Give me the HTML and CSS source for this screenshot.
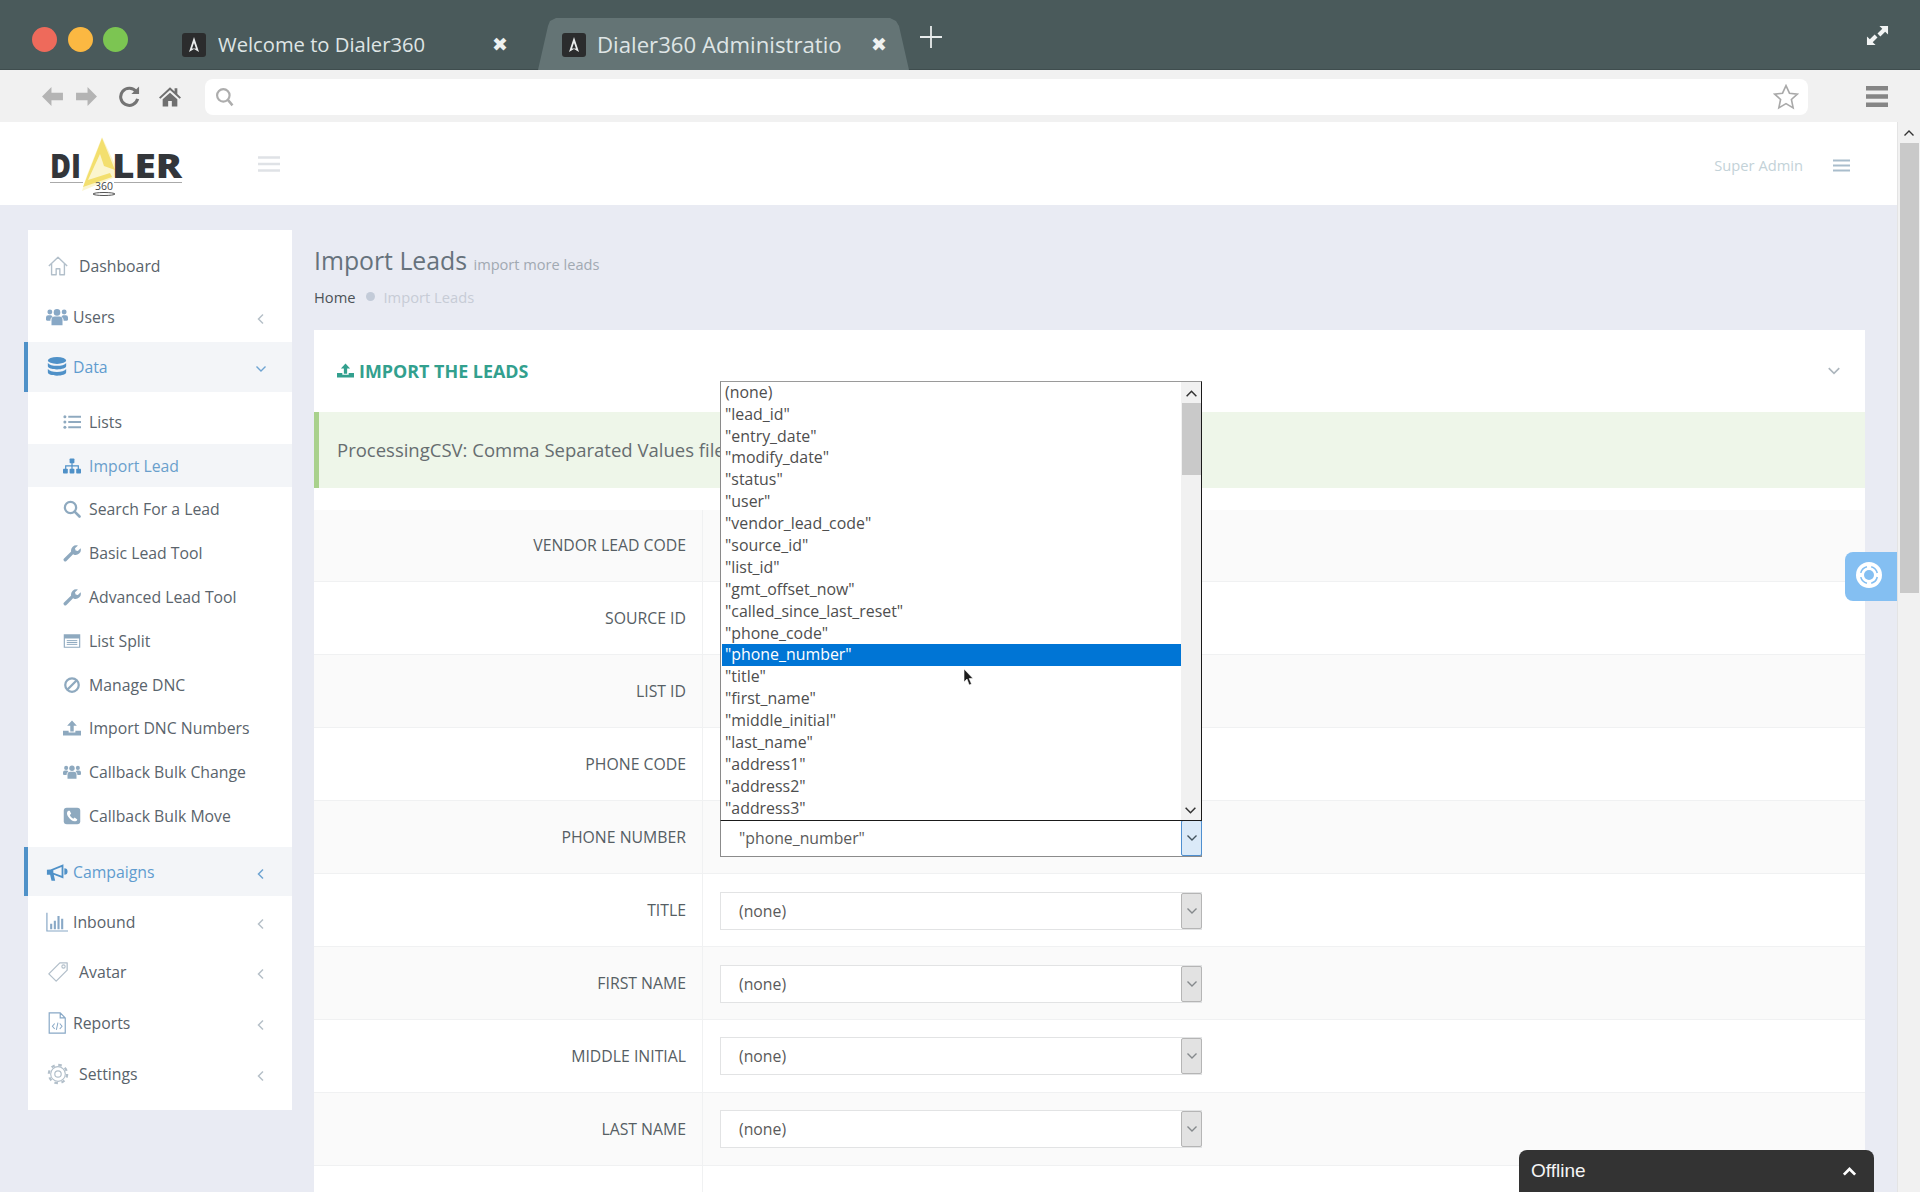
FILE: index.html
```html
<!DOCTYPE html>
<html lang="en">
<head>
<meta charset="utf-8">
<title>Dialer360 Administration</title>
<link rel="stylesheet" href="styles.css">
</head>
<body>
<svg class="sprite" aria-hidden="true">
  <symbol id="i-home" viewBox="0 0 24 24"><path d="M2 12 12 2.5 22 12M5 9.5V21.5h5V15h4v6.500h5V9.500" fill="none" stroke="currentColor" stroke-width="1.500" stroke-linejoin="round"/></symbol>
  <symbol id="i-users" viewBox="0 0 24 24"><g fill="currentColor"><circle cx="12" cy="7" r="3.600"/><circle cx="4.200" cy="6.500" r="2.700"/><circle cx="19.800" cy="6.500" r="2.700"/><path d="M6 21v-6a3.500 3.500 0 0 1 3.500-3.500h5A3.500 3.500 0 0 1 18 15v6z"/><path d="M0 15v-2.500a2.500 2.500 0 0 1 2.500-2.500h3.300c.4.800 1 1.300 1.500 1.700C5.500 12.500 4.800 14 4.800 15.500V16H1.500A1.500 1.500 0 0 1 0 15zM24 15v-2.500a2.500 2.500 0 0 0-2.500-2.500h-3.300c-.4.800-1 1.300-1.500 1.700 1.800.8 2.500 2.300 2.500 3.800V16h3.300a1.500 1.500 0 0 0 1.500-1z"/></g></symbol>
  <symbol id="i-db" viewBox="0 0 24 24"><g fill="currentColor"><ellipse cx="12" cy="4.800" rx="10" ry="3.800"/><path d="M2 7.500c1.500 2.300 5.500 3.200 10 3.200s8.500-.9 10-3.200V11c0 2.200-4.500 3.700-10 3.700S2 13.200 2 11z"/><path d="M2 13.500c1.500 2.300 5.500 3.200 10 3.200s8.500-.9 10-3.200V17c0 2.200-4.500 3.700-10 3.700S2 19.200 2 17z" transform="translate(0 .8)"/></g></symbol>
  <symbol id="i-list" viewBox="0 0 24 24"><g fill="currentColor"><circle cx="2.500" cy="5" r="2"/><circle cx="2.500" cy="12" r="2"/><circle cx="2.500" cy="19" r="2"/><rect x="7" y="3.700" width="17" height="2.600"/><rect x="7" y="10.700" width="17" height="2.600"/><rect x="7" y="17.700" width="17" height="2.600"/></g></symbol>
  <symbol id="i-sitemap" viewBox="0 0 24 24"><g fill="currentColor"><rect x="8.800" y="2" width="6.400" height="6.400" rx="1"/><rect x="0" y="15.500" width="6.400" height="6.400" rx="1"/><rect x="8.800" y="15.500" width="6.400" height="6.400" rx="1"/><rect x="17.600" y="15.500" width="6.400" height="6.400" rx="1"/><path d="M11.200 8h1.600v3h8.400v5h-1.600v-3.400h-6.800V16h-1.600v-3.400H4.400V16H2.800v-5h8.400z"/></g></symbol>
  <symbol id="i-search" viewBox="0 0 24 24"><circle cx="10" cy="10" r="7.500" fill="none" stroke="currentColor" stroke-width="3"/><path d="M15.500 15.500 22 22" stroke="currentColor" stroke-width="3.500" stroke-linecap="round"/></symbol>
  <symbol id="i-wrench" viewBox="0 0 24 24"><path d="M3 21 12.500 11.500" stroke="currentColor" stroke-width="4.500" stroke-linecap="round"/><path d="M11 10.500A7 7 0 0 1 20 2l-4 3.500.8 3 3 .8L23.500 5.500A7 7 0 0 1 14 14z" fill="currentColor"/></symbol>
  <symbol id="i-window" viewBox="0 0 24 24"><path fill="currentColor" d="M1 3h22v18H1zM2.500 8.500v11h19v-11z" fill-rule="evenodd"/><path d="M5 11.500h14M5 14h14M5 16.500h14" stroke="currentColor" stroke-width="1.300"/></symbol>
  <symbol id="i-ban" viewBox="0 0 24 24"><circle cx="12" cy="12" r="9" fill="none" stroke="currentColor" stroke-width="3"/><path d="M6 18 18 6" stroke="currentColor" stroke-width="3"/></symbol>
  <symbol id="i-upload" viewBox="0 0 24 24"><path fill="currentColor" d="M12 2l6.500 7h-4.200v7.500H9.700V9H5.500zM0 15.500h7.500V18h9v-2.500H24V22H0z"/></symbol>
  <symbol id="i-phone" viewBox="0 0 24 24"><rect x="1" y="1" width="22" height="22" rx="4" fill="currentColor"/><path d="M7.500 5C5 6 4.500 9 7 13s6 6.500 9.500 6c1.500-.2 2.500-1.500 2.500-2.500l-3.500-2.500-1.800 1.600c-1.800-.8-3.800-3-4.600-5l1.800-1.500L9 5z" fill="#fff"/></symbol>
  <symbol id="i-bullhorn" viewBox="0 0 24 24"><path fill="currentColor" d="M1 9.500 5 9.300 19 3.500v15.500L8.500 15l1.500 6.500H6L4.500 15H1zM17 6.500 8 10v2.700l9 3.500zM20 8a3.500 3.500 0 0 1 0 7z" fill-rule="evenodd"/></symbol>
  <symbol id="i-chart" viewBox="0 0 24 24"><path d="M1 2v19.800h23" fill="none" stroke="currentColor" stroke-width="1.300"/><path fill="currentColor" d="M4.500 14h2.300v6H4.500zM8.500 10.500h2.300V20H8.500zM12.500 5.500h2.300V20h-2.300zM16.500 8.500h2.300V20h-2.300z"/></symbol>
  <symbol id="i-tag" viewBox="0 0 24 24"><path d="M14 2h8v8L10 22 2 14z" fill="none" stroke="currentColor" stroke-width="1.400" stroke-linejoin="round"/><circle cx="18" cy="6" r="1.800" fill="none" stroke="currentColor" stroke-width="1.200"/></symbol>
  <symbol id="i-file" viewBox="0 0 24 24"><path d="M3.500 1h12L21 6.500V23H3.500zM15.500 1v5.500H21" fill="none" stroke="currentColor" stroke-width="1.300"/><path d="M9.500 12.500 7 15.500l2.500 3M15 12.500l2.500 3-2.500 3M13 11.500l-1.700 8" fill="none" stroke="currentColor" stroke-width="1.100"/></symbol>
  <symbol id="i-gear" viewBox="0 0 24 24"><g fill="none" stroke="currentColor"><circle cx="12" cy="12" r="10" stroke-width="2.400" stroke-dasharray="3.900 3.950"/><circle cx="12" cy="12" r="8" stroke-width="1.200"/><circle cx="12" cy="12" r="3.500" stroke-width="1.300"/></g></symbol>
  <symbol id="i-left" viewBox="0 0 12 12"><path d="M8 1.500 3.500 6 8 10.500" fill="none" stroke="currentColor" stroke-width="1.500"/></symbol>
  <symbol id="i-down" viewBox="0 0 12 12"><path d="M1.500 3.500 6 8l4.500-4.500" fill="none" stroke="currentColor" stroke-width="1.400"/></symbol>
  <symbol id="i-up" viewBox="0 0 12 12"><path d="M1.500 8.500 6 4l4.500 4.500" fill="none" stroke="currentColor" stroke-width="1.400"/></symbol>
  <symbol id="i-menu" viewBox="0 0 22 16"><path d="M0 1.500h22M0 8h22M0 14.500h22" stroke="currentColor" stroke-width="2.500"/></symbol>
  <symbol id="i-fav" viewBox="0 0 24 24"><rect width="24" height="24" rx="3" fill="#2b2c2d"/><path d="M12 4l5 15-5-3-5 3z" fill="#e9ecec"/><path d="M12 10l2 5.500h-4z" fill="#2b2c2d"/></symbol>
</svg>

<div class="tabstrip">
  <div class="lights"><span class="light red"></span><span class="light amber"></span><span class="light green"></span></div>
  <div class="tab">
    <svg class="fav"><use href="#i-fav"/></svg><span class="tab-title">Welcome to Dialer360</span><span class="tab-x">✖</span>
  </div>
  <div class="tab tab-active">
    <svg class="fav"><use href="#i-fav"/></svg><span class="tab-title">Dialer360 Administratio</span><span class="tab-x">✖</span>
  </div>
  <svg class="newtab" viewBox="0 0 22 22"><path d="M11 0v22M0 11h22" stroke="#e8ecec" stroke-width="1.800"/></svg>
  <svg class="fullscreen" viewBox="0 0 24 24"><path d="M14 2h9v9l-3-3-5 5-3-3 5-5zM10 22H1v-9l3 3 5-5 3 3-5 5z" fill="#f2f4f4"/></svg>
</div>

<div class="toolbar">
  <svg class="tb tb-arrow" viewBox="0 0 22 20"><path d="M10 1 1 10l9 9v-5.500h11v-7H10z" fill="#b4b4b4"/></svg>
  <svg class="tb tb-arrow tb-fwd" viewBox="0 0 22 20"><path d="M12 1l9 9-9 9v-5.500H1v-7h11z" fill="#b4b4b4"/></svg>
  <svg class="tb tb-reload" viewBox="0 0 22 22"><path d="M18 6.500A9 9 0 1 0 19.500 14" fill="none" stroke="#747474" stroke-width="3.200"/><path d="M21 1v8h-8z" fill="#747474"/></svg>
  <svg class="tb tb-home" viewBox="0 0 24 22"><path d="M12 1l5 4.500V2h3v6.200l4 3.800-1.500 1.500L12 4 1.500 13.500 0 12zM4 14l8-7 8 7v8h-6v-6h-4v6H4z" fill="#6f6f6f"/></svg>
  <div class="address">
    <svg class="addr-search" viewBox="0 0 24 24"><circle cx="10" cy="10" r="7.500" fill="none" stroke="#adadad" stroke-width="2.600"/><path d="M15.500 15.500 21 22" stroke="#adadad" stroke-width="3"/></svg>
    <svg class="addr-star" viewBox="0 0 24 24"><path d="M12 1.500l3.200 7 7.300.8-5.500 5 1.600 7.700-6.600-3.900L5.400 22 7 14.300l-5.500-5 7.300-.8z" fill="none" stroke="#a9a9a9" stroke-width="1.500"/></svg>
  </div>
  <svg class="tb tb-menu" viewBox="0 0 22 21"><path d="M0 0h22v4.500H0zM0 8.200h22v4.500H0zM0 16.500h22V21H0z" fill="#868686"/></svg>
</div>

<div class="viewport">
  <div class="page">
    <header class="topbar">
      <svg class="logo" viewBox="0 0 132 60" role="img" aria-label="Dialer 360">
        <path d="M52 0 70 38 32 54 37 38z" fill="#f8ecA6" opacity=".55"/>
        <path d="M52 1 65 33 54 29 50 17 38 43 60 36 62 40 33 50z" fill="#f3df6e"/>
        <text class="logo-word" x="0" y="41" textLength="31" lengthAdjust="spacingAndGlyphs">DI</text>
        <text class="logo-word" x="62" y="41" textLength="70" lengthAdjust="spacingAndGlyphs">LER</text>
        <path d="M0 45.500h33M64 45.500h68" stroke="#aaa" stroke-width="1"/>
        <text class="logo-360" x="45" y="52.500" textLength="18" lengthAdjust="spacingAndGlyphs">360</text>
        <ellipse cx="54" cy="57" rx="11" ry="1.500" fill="none" stroke="#555" stroke-width="1"/>
      </svg>
      <svg class="burger"><use href="#i-menu"/></svg>
      <span class="user">Super Admin</span>
      <svg class="burger-sm"><use href="#i-menu"/></svg>
    </header>

    <main class="main">
      <aside class="sidebar">
        <a class="nav"><svg class="nav-ic wide"><use href="#i-home"/></svg><span>Dashboard</span></a>
        <a class="nav"><svg class="nav-ic"><use href="#i-users"/></svg><span>Users</span><svg class="caret"><use href="#i-left"/></svg></a>
        <a class="nav active"><svg class="nav-ic"><use href="#i-db"/></svg><span>Data</span><svg class="caret"><use href="#i-down"/></svg></a>
        <div class="subnav">
          <a class="sub"><svg class="sub-ic"><use href="#i-list"/></svg>Lists</a>
          <a class="sub current"><svg class="sub-ic"><use href="#i-sitemap"/></svg>Import Lead</a>
          <a class="sub"><svg class="sub-ic"><use href="#i-search"/></svg>Search For a Lead</a>
          <a class="sub"><svg class="sub-ic"><use href="#i-wrench"/></svg>Basic Lead Tool</a>
          <a class="sub"><svg class="sub-ic"><use href="#i-wrench"/></svg>Advanced Lead Tool</a>
          <a class="sub"><svg class="sub-ic"><use href="#i-window"/></svg>List Split</a>
          <a class="sub"><svg class="sub-ic"><use href="#i-ban"/></svg>Manage DNC</a>
          <a class="sub"><svg class="sub-ic"><use href="#i-upload"/></svg>Import DNC Numbers</a>
          <a class="sub"><svg class="sub-ic"><use href="#i-users"/></svg>Callback Bulk Change</a>
          <a class="sub"><svg class="sub-ic"><use href="#i-phone"/></svg>Callback Bulk Move</a>
        </div>
        <a class="nav active"><svg class="nav-ic"><use href="#i-bullhorn"/></svg><span>Campaigns</span><svg class="caret"><use href="#i-left"/></svg></a>
        <a class="nav"><svg class="nav-ic"><use href="#i-chart"/></svg><span>Inbound</span><svg class="caret"><use href="#i-left"/></svg></a>
        <a class="nav"><svg class="nav-ic wide"><use href="#i-tag"/></svg><span>Avatar</span><svg class="caret"><use href="#i-left"/></svg></a>
        <a class="nav"><svg class="nav-ic"><use href="#i-file"/></svg><span>Reports</span><svg class="caret"><use href="#i-left"/></svg></a>
        <a class="nav"><svg class="nav-ic wide"><use href="#i-gear"/></svg><span>Settings</span><svg class="caret"><use href="#i-left"/></svg></a>
      </aside>

      <section class="content">
        <h1 class="title">Import Leads <small>import more leads</small></h1>
        <div class="crumbs"><a>Home</a><i class="dot"></i><span>Import Leads</span></div>
        <div class="box">
          <div class="box-head">
            <svg class="box-ic"><use href="#i-upload"/></svg>
            <h2>IMPORT THE LEADS</h2>
            <svg class="box-chev"><use href="#i-down"/></svg>
          </div>
          <div class="notice">ProcessingCSV: Comma Separated Values file</div>
          <div class="form">
            <div class="row"><label>VENDOR LEAD CODE</label><div class="field"></div></div>
            <div class="row"><label>SOURCE ID</label><div class="field"></div></div>
            <div class="row"><label>LIST ID</label><div class="field"></div></div>
            <div class="row"><label>PHONE CODE</label><div class="field"></div></div>
            <div class="row"><label>PHONE NUMBER</label><div class="field">
              <div class="select open"><span>"phone_number"</span><b class="sel-btn"><svg><use href="#i-down"/></svg></b>
                <div class="dropdown">
                  <ul class="options">
                    <li>(none)</li><li>"lead_id"</li><li>"entry_date"</li><li>"modify_date"</li><li>"status"</li><li>"user"</li><li>"vendor_lead_code"</li><li>"source_id"</li><li>"list_id"</li><li>"gmt_offset_now"</li><li>"called_since_last_reset"</li><li>"phone_code"</li><li class="picked">"phone_number"</li><li>"title"</li><li>"first_name"</li><li>"middle_initial"</li><li>"last_name"</li><li>"address1"</li><li>"address2"</li><li>"address3"</li>
                  </ul>
                  <div class="dd-bar"><svg class="dd-arrow"><use href="#i-up"/></svg><i class="dd-thumb"></i><svg class="dd-arrow dd-arrow-down"><use href="#i-down"/></svg></div>
                </div>
                <svg class="cursor" viewBox="0 0 11 17"><path d="M1 0v13l3-3 2.200 6 2.300-1-2.300-5.500H10z" fill="#1c1c1c" stroke="#fff" stroke-width=".6"/></svg>
              </div>
            </div></div>
            <div class="row"><label>TITLE</label><div class="field"><div class="select"><span>(none)</span><b class="sel-btn"><svg><use href="#i-down"/></svg></b></div></div></div>
            <div class="row"><label>FIRST NAME</label><div class="field"><div class="select"><span>(none)</span><b class="sel-btn"><svg><use href="#i-down"/></svg></b></div></div></div>
            <div class="row"><label>MIDDLE INITIAL</label><div class="field"><div class="select"><span>(none)</span><b class="sel-btn"><svg><use href="#i-down"/></svg></b></div></div></div>
            <div class="row"><label>LAST NAME</label><div class="field"><div class="select"><span>(none)</span><b class="sel-btn"><svg><use href="#i-down"/></svg></b></div></div></div>
            <div class="row"><label></label><div class="field"></div></div>
          </div>
        </div>
      </section>
    </main>

    <div class="help"><svg viewBox="0 0 26 26"><circle cx="13" cy="13" r="13" fill="#fff"/><circle cx="13" cy="13" r="8.500" fill="none" stroke="#84bff2" stroke-width="1.600" stroke-dasharray="9 4.350" stroke-dashoffset="-2"/><circle cx="13" cy="13" r="5" fill="#84bff2"/></svg></div>
    <div class="chat"><span>Offline</span><svg viewBox="0 0 12 12"><path d="M1.500 8.500 6 4l4.500 4.500" fill="none" stroke="#fff" stroke-width="2.200"/></svg></div>
  </div>
  <div class="scrollbar"><svg class="sb-up"><use href="#i-up"/></svg><i class="sb-thumb"></i></div>
</div>
</body>
</html>
```

FILE: styles.css
```css
* { box-sizing: border-box; }
html, body { height: 100%; }
body {
  margin: 0;
  height: 100vh;
  overflow: hidden;
  display: flex;
  flex-direction: column;
  font-family: "Open Sans", "Noto Sans", sans-serif;
  font-size: 15.800px;
  color: #5a646c;
  background: #e9ebf3;
}
a { color: inherit; text-decoration: none; }
.sprite { position: absolute; width: 0; height: 0; }

/* browser tab strip */
.tabstrip {
  height: 70px;
  flex: none;
  display: flex;
  align-items: flex-end;
  background: #4a5a5b;
  padding-left: 32px;
  position: relative;
  border-bottom: 1px solid #3f4d4e;
}
.lights { display: flex; gap: 10.500px; align-self: flex-start; margin-top: 27px; width: 150px; }
.light { width: 25px; height: 25px; border-radius: 50%; }
.red { background: #ee6a5b; }
.amber { background: #fbb842; }
.green { background: #7cc552; }
.tab {
  width: 356px;
  height: 52px;
  display: flex;
  align-items: center;
  color: #dfe5e5;
  font-size: 20.200px;
  margin-bottom: -1px;
}
.fav { width: 24px; height: 24px; flex: none; margin: 2px 12px 0 0; }
.tab-title { width: 274px; white-space: nowrap; overflow: hidden; flex: none; }
.tab-x { font-size: 19px; color: #eef1f1; font-family: "DejaVu Sans", sans-serif; }
.tab-active {
  width: 371px;
  padding-left: 24px;
  background: #647475;
  font-size: 22.200px;
  clip-path: polygon(0 100%, 10px 8px, 12px 3px, 18px 0, 352px 0, 358px 3px, 361px 8px, 100% 100%);
}
.tab-active .fav { margin-right: 11px; }
.tab-active .tab-title { width: 274px; }
.newtab { position: absolute; left: 920px; top: 26px; width: 22px; height: 22px; }
.fullscreen { position: absolute; left: 1866px; top: 24px; width: 23px; height: 23px; }

/* browser toolbar */
.toolbar {
  height: 52px;
  flex: none;
  display: flex;
  align-items: center;
  background: #f1f1f1;
  padding-left: 41px;
}
.tb { flex: none; }
.tb-arrow { width: 23px; height: 21px; margin-top: 1px; }
.tb-fwd { margin-left: 11px; }
.tb-reload { width: 21px; height: 22px; margin-left: 21px; }
.tb-home { width: 22px; height: 21px; margin-left: 19px; }
.address {
  width: 1603px;
  height: 36px;
  margin-left: 24px;
  margin-top: 1px;
  background: #fff;
  border-radius: 8px;
  display: flex;
  align-items: center;
  justify-content: space-between;
  padding: 0 9px;
}
.addr-search { width: 20px; height: 20px; margin-left: 1px; margin-top: 1px; }
.addr-star { width: 26px; height: 26px; }
.tb-menu { width: 22px; height: 21px; margin-left: 58px; }

/* page viewport */
.viewport { flex: 1; min-height: 0; display: flex; }
.page { flex: 1; min-width: 0; position: relative; overflow: hidden; display: flex; flex-direction: column; }
.scrollbar { width: 23px; flex: none; background: #f1f1f1; display: flex; flex-direction: column; align-items: center; border-left: 1px solid #e4e4e4; }
.sb-up { width: 12px; height: 12px; margin-top: 5px; color: #333; flex: none; }
.sb-thumb { display: block; width: 19px; height: 450px; margin-top: 4px; background: #c9c9c9; }

.topbar {
  height: 83px;
  flex: none;
  background: #fff;
  display: flex;
  align-items: center;
  padding-left: 50px;
}
.logo { width: 132px; height: 60px; flex: none; margin-top: 7px; overflow: visible; }
.logo-word { font: 800 33px "Open Sans", sans-serif; fill: #33363a; }
.logo-360 { font: 400 11px "Open Sans", sans-serif; fill: #444; }
.burger { width: 22px; height: 16px; margin-left: 76px; color: #dfe2e6; flex: none; }
.user { margin-left: auto; color: #c3d2d8; font-size: 14.700px; margin-top: 3px; }
.burger-sm { width: 17px; height: 13px; margin: 3px 47px 0 30px; color: #a9bdcc; flex: none; }

.main { flex: 1; min-height: 0; display: flex; align-items: flex-start; gap: 22px; padding: 25px 32px 0 28px; background: #e9ebf3; }

/* sidebar */
.sidebar { width: 264px; flex: none; background: #fff; padding: 11px 0; }
.nav {
  height: 50.700px;
  display: flex;
  align-items: center;
  padding-left: 18px;
  color: #59636b;
  position: relative;
}
.nav.active { background: #f3f5f8; color: #5f9ccf; box-shadow: -4px 0 0 #4f91c8; height: 49.500px; }
.nav-ic { width: 22px; height: 22px; flex: none; margin-right: 5px; color: #88a8c6; }
.nav-ic.wide { margin: 0 10px 0 1px; color: #b2bfca; }
.nav.active .nav-ic { color: #4f91c8; }
.caret { position: absolute; left: 227px; top: 50%; margin-top: -4px; width: 12px; height: 12px; color: #b6c0c8; }
.nav.active .caret { color: #6ea4d2; }
.subnav { padding: 8px 0 9px; }
.sub {
  height: 43.800px;
  display: flex;
  align-items: center;
  padding-left: 35px;
  color: #5a646c;
}
.sub.current { background: #f3f5f8; color: #6a9fcc; }
.sub-ic { width: 18px; height: 18px; flex: none; margin-right: 8px; color: #8ea9bf; }
.sub.current .sub-ic { color: #4f91c8; }

/* content */
.content { flex: 1; min-width: 0; }
.title { margin: 12.500px 0 0; font-size: 24.800px; font-weight: 400; color: #66727c; line-height: 34px; }
.title small { font-size: 14.600px; color: #a1a9b2; }
.crumbs { display: flex; align-items: center; height: 24px; margin-top: 4px; font-size: 14.700px; color: #c7ccd6; }
.crumbs a { color: #4c5257; }
.dot { width: 9px; height: 9px; border-radius: 50%; background: #c3cbd8; margin: 0 9px 0 10px; }
.box { margin-top: 21px; background: #fff; }
.box-head { height: 82px; display: flex; align-items: center; padding-left: 23px; position: relative; }
.box-ic { width: 17px; height: 17px; color: #32a08e; margin-right: 5px; }
.box-head h2 { margin: 0; font-size: 17.900px; font-weight: 700; color: #32a08e; }
.box-chev { position: absolute; right: 22px; top: 34px; width: 18px; height: 14px; color: #adb6bd; }
.notice { height: 76px; display: flex; align-items: center; padding-left: 18px; margin-bottom: 22px; background: #eef6e9; border-left: 5px solid #a9d18c; font-size: 18.500px; color: #666d70; }
.row { height: 72.900px; display: flex; border-bottom: 1px solid #f0f1f2; }
.row:nth-child(odd) { background: #fafafa; }
.row label { width: 389px; flex: none; display: flex; align-items: center; justify-content: flex-end; padding-right: 16px; border-right: 1px solid #f0f1f2; color: #565e64; }
.field { flex: 1; display: flex; align-items: center; padding: 1.500px 0 0 17px; }

.select { width: 482px; height: 38px; display: flex; align-items: center; justify-content: space-between; background: #fff; border: 1px solid #e2e3e4; padding-left: 18px; color: #5a5a5a; position: relative; }
.sel-btn { width: 21px; height: 100%; flex: none; display: flex; align-items: center; justify-content: center; background: #e2e2e2; border: 1px solid #b5b5b5; border-radius: 2px; color: #85898c; margin-right: -1px; }
.sel-btn svg { width: 12px; height: 12px; }
.select.open { border-color: #8b8b8b; }
.select.open .sel-btn { background: #dbeaf8; border-color: #4e8fd0; color: #44555f; }

.dropdown {
  position: absolute;
  left: -1px;
  bottom: 100%;
  margin-bottom: -1px;
  width: 482px;
  height: 440px;
  display: flex;
  background: #fff;
  border: 1px solid #1a1a1a;
  border-left-color: #8a8a8a;
  border-top-color: #9a9a9a;
  border-bottom-width: 1.500px;
}
.options { list-style: none; margin: 0; padding: 0; flex: 1; min-width: 0; }
.options li { height: 21.900px; line-height: 21.900px; padding-left: 3px; color: #4e4e4e; white-space: nowrap; margin-left: 1px; font-size: 15.900px; }
.options li.picked { background: #0075d5; color: #fff; }
.dd-bar { width: 20px; flex: none; background: #f1f1f1; display: flex; flex-direction: column; align-items: center; position: relative; }
.dd-arrow { width: 13px; height: 13px; margin-top: 5px; color: #333; flex: none; }
.dd-arrow-down { position: absolute; left: 3px; bottom: 3px; }
.dd-thumb { display: block; width: 19px; height: 72px; margin-top: 3px; background: #c9c9c9; }
.cursor { position: absolute; left: 242px; top: -151px; width: 11px; height: 17px; }

/* overlays */
.help { position: absolute; left: 1845px; top: 430px; width: 52px; height: 49px; background: #84bff2; border-radius: 8px 0 0 8px; display: flex; align-items: center; justify-content: center; padding: 0 4px 3px 0; }
.help svg { width: 26px; height: 26px; }
.chat { position: absolute; left: 1519px; bottom: 0; width: 355px; height: 42px; background: #333; border-radius: 8px 8px 0 0; display: flex; align-items: center; justify-content: space-between; padding: 0 17px 0 12px; color: #f5f5f5; font: 19px "Liberation Sans", Arial, sans-serif; }
.chat svg { width: 15px; height: 15px; }
```
